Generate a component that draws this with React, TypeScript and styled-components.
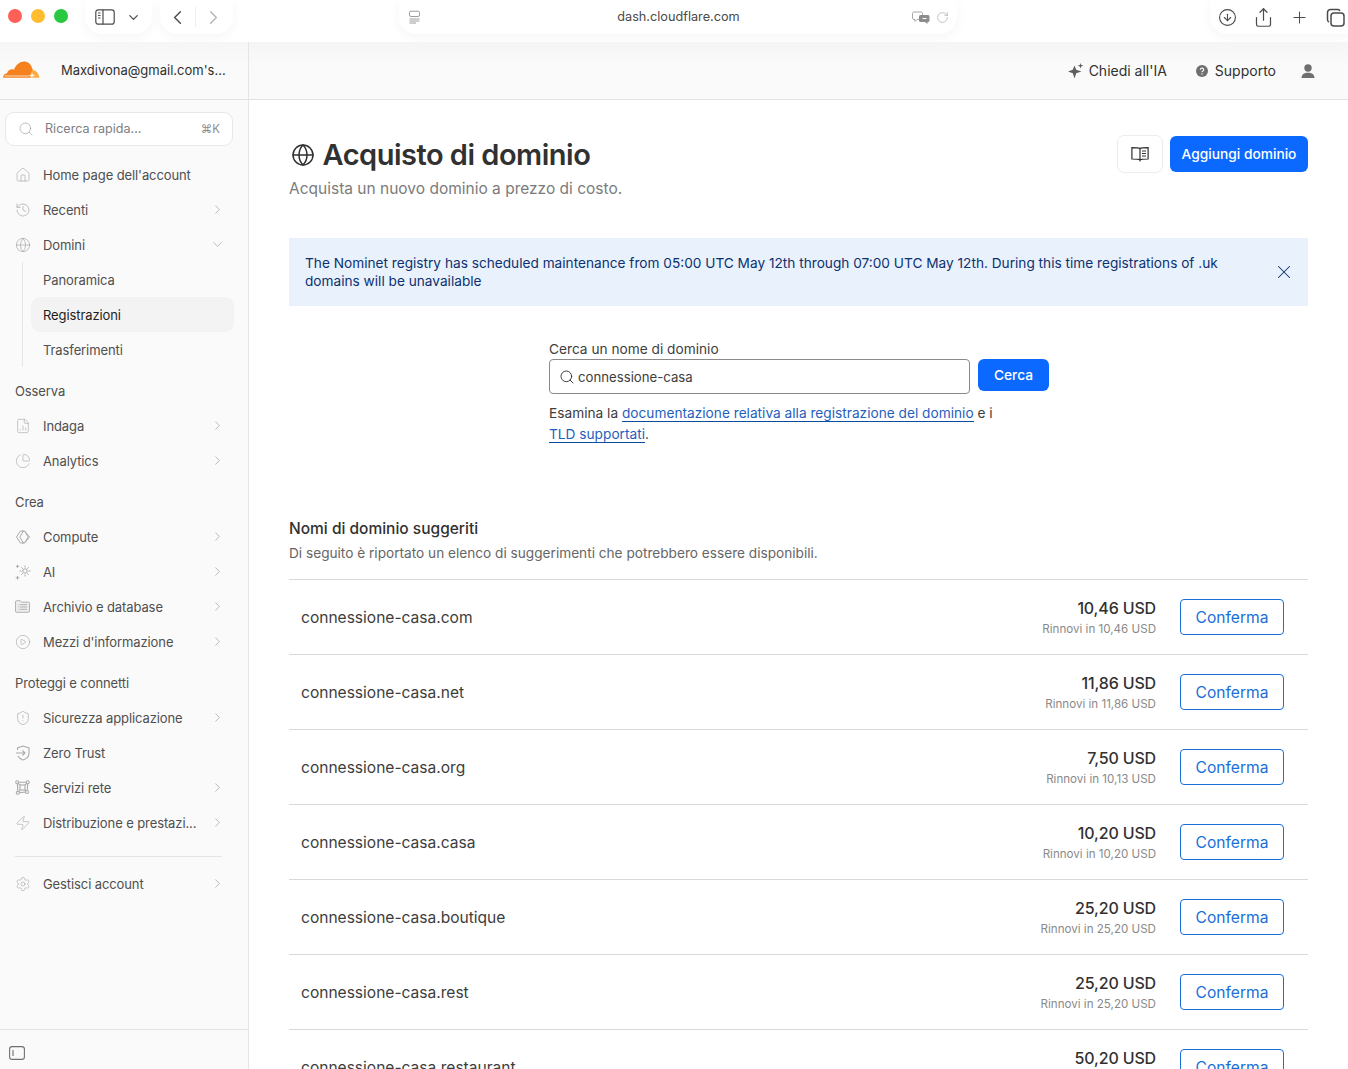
import React from "react";
import styled, { createGlobalStyle } from "styled-components";
import {
  ChevronDown, ChevronLeft, ChevronRight, CircleArrowDown, Plus, Search, X, House, History, Globe,
  ChartPie, CirclePlay, ShieldAlert, Settings, Zap, RotateCw, FileChartColumn, Share,
} from "lucide-react";

const Global = createGlobalStyle`
  html, body { margin: 0; padding: 0; height: 1069px; overflow: hidden; background: #fff; }
  body { font-family: Inter, "Liberation Sans", sans-serif; color: #313131; }
  * { box-sizing: border-box; }
  a { text-decoration: none; }
`;

const Page = styled.div`display: flex; flex-direction: column; width: 1348px; height: 1069px; overflow: hidden;`;

const BrowserBar = styled.div`
  display: flex; flex: none; height: 42px; background: #fff; padding-left: 8px; align-items: flex-start;
`;
const Lights = styled.div`display: flex; gap: 9px; margin-top: 9px; margin-right: 17px;`;
const Light = styled.span<{ $c: string }>`width: 14px; height: 14px; border-radius: 50%; background: ${p => p.$c};`;
const Pill = styled.div<{ $w: number; $ml?: number; $open?: boolean }>`
  display: flex; align-items: center; height: 34px; width: ${p => p.$w}px; margin-left: ${p => p.$ml ?? 0}px; flex: none;
  background: #fff; border-radius: ${p => (p.$open ? "0 0 0 17px" : "0 0 17px 17px")}; box-shadow: 0 3px 12px rgba(0,0,0,.045); color: #4c4c4c;
`;
const PillIcon = styled.span<{ $ml?: number; $mr?: number; $c?: string }>`
  display: flex; margin-left: ${p => p.$ml ?? 0}px; margin-right: ${p => p.$mr ?? 0}px; color: ${p => p.$c ?? "inherit"};
`;
const AddressText = styled.div`flex: 1; text-align: center; font-size: 12.7px; color: #4a4a4a; padding: 0 0 1px 24px;`;
const TabDivider = styled.span`width: 1px; height: 20px; background: #eee; margin: 0 6px;`;

const Shell = styled.div`display: flex; flex: 1; min-height: 0;`;
const Sidebar = styled.aside`
  width: 249px; flex: none; display: flex; flex-direction: column; background: #fafafa; border-right: 1px solid #e5e5e5;
`;
const Brand = styled.div`
  display: flex; align-items: center; height: 58px; flex: none; border-bottom: 1px solid #e2e2e2; padding-left: 3px; gap: 21px;
  font-size: 13px; color: #313131; padding-bottom: 2px; background: linear-gradient(#f6f6f6, #fafafa 40%);
`;
const QuickSearch = styled.div`
  display: flex; align-items: center; height: 34px; margin: 12px 15px 0 5px; padding: 0 12px 1px 12px; flex: none;
  background: #fff; border: 1px solid #e8e8e8; border-radius: 9px; color: #808080; font-size: 12.6px; gap: 11px;
`;
const Kbd = styled.span`margin-left: auto; font-size: 11.5px; color: #8c8c8c;`;
const Nav = styled.nav`flex: 1; padding-top: 11px; display: flex; flex-direction: column; min-height: 0;`;
const Row = styled.div`
  display: flex; align-items: center; height: 35px; padding-left: 15px; padding-right: 23px; font-size: 13px; letter-spacing: -0.1px; color: #4f4f4f; flex: none;
`;
const IconSlot = styled.span`width: 28px; flex: none; display: flex; align-items: center; color: #aaa;`;
const RowLabel = styled.span`flex: 1; white-space: nowrap;`;
const Chevron = styled.span`display: flex; color: #a6a6a6;`;
const SubGroup = styled.div`margin-left: 22px; border-left: 1px solid #e6e6e6; padding-left: 8px; margin-right: 14px;`;
const SubRow = styled.div<{ $active?: boolean }>`
  display: flex; align-items: center; height: 35px; padding-left: 12px; border-radius: 9px; font-size: 13px; letter-spacing: -0.1px;
  background: ${p => (p.$active ? "#f3f3f3" : "transparent")}; color: ${p => (p.$active ? "#1d1d1d" : "#4f4f4f")};
`;
const SectionLabel = styled.div`
  display: flex; align-items: center; height: 35px; margin-top: 6px; padding-left: 15px; font-size: 13px; letter-spacing: -0.1px; color: #4f4f4f; flex: none;
`;
const NavRule = styled.div`height: 1px; background: #e5e5e5; margin: 16px 26px 9px 15px; flex: none;`;
const SideFoot = styled.div`
  height: 40px; flex: none; border-top: 1px solid #e5e5e5; padding: 16px 0 0 9px; color: #6f6f6f; display: flex; align-items: flex-start;
`;

const Main = styled.main`flex: 1; min-width: 0; display: flex; flex-direction: column;`;
const TopBar = styled.header`
  height: 58px; flex: none; display: flex; align-items: center; justify-content: flex-end; gap: 29px; padding: 0 33px 0 0;
  background: linear-gradient(#f5f5f5, #fafafa 40%); border-bottom: 1px solid #e2e2e2; font-size: 14px; color: #313131;
`;
const TopAction = styled.div<{ $gap?: number; $ml?: number }>`
  display: flex; align-items: center; gap: ${p => p.$gap ?? 5}px; margin-left: ${p => p.$ml ?? 0}px; white-space: nowrap;
`;
const Content = styled.div`padding: 35px 40px 0; display: flex; flex-direction: column;`;
const TitleRow = styled.div`display: flex; justify-content: space-between; align-items: flex-start;`;
const TitleCol = styled.div`display: flex; flex-direction: column;`;
const TitleLine = styled.div`display: flex; align-items: center; gap: 7.5px; height: 38px; margin-top: 1px; color: #313131; padding-left: 2px;`;
const Title = styled.h1`margin: 0; font-size: 29px; line-height: 38px; font-weight: 600; letter-spacing: -0.5px; color: #313131;`;
const Subtitle = styled.div`font-size: 15.5px; line-height: 24px; color: #7b7b7b; margin-top: 3px;`;
const Actions = styled.div`display: flex; gap: 7px; align-items: center;`;
const IconButton = styled.button`
  width: 46px; height: 38px; display: flex; align-items: center; justify-content: center; padding: 0;
  background: #fff; border: 1px solid #ececec; border-radius: 7px; color: #313131;
`;
const PrimaryButton = styled.button<{ $w: number; $h: number; $pb?: number }>`
  width: ${p => p.$w}px; height: ${p => p.$h}px; flex: none; padding: 0 0 ${p => p.$pb ?? 0}px; background: #0b69ff; color: #fff; border: 0; border-radius: 6px;
  font: 500 13.75px Inter, sans-serif;
`;
const Banner = styled.div`
  display: flex; align-items: center; height: 68px; margin-top: 37px; padding: 0 13px 0 16px; background: #e9f1fc; color: #0c3170;
  font-size: 13.67px; line-height: 18px;
`;
const BannerText = styled.div`flex: 1; max-width: 950px;`;
const BannerClose = styled.span`margin-left: auto; display: flex; color: #0c3170;`;
const SearchBlock = styled.section`width: 500px; margin: 34px 0 0 260px; font-size: 13.7px; color: #3d3d3d;`;
const FieldLabel = styled.div`line-height: 18px; height: 19px;`;
const FieldRow = styled.div`display: flex; gap: 8px; align-items: flex-start;`;
const Field = styled.div`
  width: 421px; height: 35px; display: flex; align-items: center; gap: 3px; padding: 0 9px; border: 1px solid #8a8a8a; border-radius: 4px;
  color: #3d3d3d; background: #fff; font-size: 13.2px;
`;
const HelpText = styled.p`margin: 9px 0 0; line-height: 21px; width: 470px;`;
const DocLink = styled.a`color: #1f5fbd; border-bottom: 1px solid #0a4d9e;`;
const Suggested = styled.h2`margin: 72px 0 0; font-size: 15.5px; line-height: 24px; font-weight: 450; color: #313131;`;
const SuggestedSub = styled.div`font-size: 13.65px; line-height: 20px; color: #666; margin-top: 2px; margin-bottom: 16px;`;
const DomainRow = styled.div`
  display: flex; align-items: center; height: 75px; flex: none; border-top: 1px solid #d9d9d9; padding: 0 24px 0 12px;
`;
const DomainName = styled.div`flex: 1; font-size: 15.55px; color: #3d3d3d;`;
const Price = styled.div`display: flex; flex-direction: column; align-items: flex-end; margin-right: 24px;`;
const PriceMain = styled.div`font-size: 16px; line-height: 20px; font-weight: 500; color: #313131; letter-spacing: -0.15px;`;
const PriceSub = styled.div`font-size: 11.6px; line-height: 16px; color: #8a8a8a; margin-top: 3px;`;
const Confirm = styled.button`
  width: 104px; height: 36px; padding: 0; background: #fff; color: #1a6fd8; border: 1px solid #1a6fd8; border-radius: 4px;
  font: 400 15.6px Inter, sans-serif;
`;

const Logo = () => (
  <svg width="37" height="17" viewBox="0 0 37 17" fill="none">
    <path d="M0 16.7 C.2 14 1.8 12.5 4 12.3 C5 9 8 7.6 11 8.7 C13 3.5 17 .5 21 .5 C25 .5 28 3 29 7 L30 9 L27 16.7 Z" fill="#f6821f" />
    <path d="M29 9 C33 9 36 12.5 36.4 16.7 L26.5 16.7 Z" fill="#fbad41" />
    <path d="M1.5 15 H26" stroke="#fff" strokeWidth=".7" />
    <path d="M29 11.3 l.7 2.2 2.6 .9 -2.6 .9 -.7 1.9 -.7 -1.9 -2.6 -.9 2.6 -.9z" fill="#fff" opacity=".9" />
  </svg>
);
const SidebarToggle = () => (
  <svg width="20" height="16" viewBox="0 0 20 16" fill="none" stroke="currentColor" strokeWidth="1.2">
    <rect x=".8" y=".8" width="18.4" height="14.4" rx="2.5" />
    <path d="M8 .8 V15.2" />
    <path d="M3 4 H5.5 M3 6.5 H5.5 M3 9 H5.5" strokeWidth="1" />
  </svg>
);
const Reader = () => (
  <svg width="13" height="14" viewBox="0 0 13 14" fill="none" stroke="#9c9c9c" strokeWidth="1">
    <path d="M3 1.2 H10 A1.5 1.5 0 0 1 11.5 2.7 V5 A1.5 1.5 0 0 1 10 6.5 H3 A1.5 1.5 0 0 1 1.5 5 V2.7 A1.5 1.5 0 0 1 3 1.2 Z" />
    <path d="M1.5 9 H11.5 M1.5 11 H11.5 M1.5 13 H8" />
  </svg>
);
const Translate = () => (
  <svg width="18" height="13" viewBox="0 0 18 13">
    <path d="M2 1 H9 A1.5 1.5 0 0 1 10.5 2.5 V7 A1.5 1.5 0 0 1 9 8.5 H5 L3 10.5 V8.5 H2 A1.5 1.5 0 0 1 .5 7 V2.5 A1.5 1.5 0 0 1 2 1 Z" fill="#fff" stroke="#a8a8a8" />
    <path d="M8.5 4 H16 A1.5 1.5 0 0 1 17.5 5.5 V9.5 A1.5 1.5 0 0 1 16 11 H15.5 V13 L13 11 H8.5 A1.5 1.5 0 0 1 7 9.5 V5.5 A1.5 1.5 0 0 1 8.5 4 Z" fill="#8c8c8c" />
    <path d="M10.5 7.5 H14.5" stroke="#fff" />
  </svg>
);
const Tabs = () => (
  <svg width="19" height="19" viewBox="0 0 19 19" fill="none" stroke="currentColor" strokeWidth="1.5">
    <rect x="5" y="5" width="13" height="13" rx="3" fill="#fff" />
    <path d="M14 2.9 A2.5 2.5 0 0 0 12 1.5 H4.5 A3 3 0 0 0 1.5 4.5 V12 A2.5 2.5 0 0 0 3 14" />
  </svg>
);
const Sparkle = () => (
  <svg width="16" height="16" viewBox="0 0 16 16" fill="#5f5f5f">
    <path d="M6.5 2.5 L8.2 6.8 L13.5 8.5 L8.2 10.2 L6.5 15.5 L4.8 10.2 L0 8.5 L4.8 6.8 Z" />
    <path d="M12.5 0 L13.2 2 L15.5 2.7 L13.2 3.4 L12.5 5.5 L11.8 3.4 L9.5 2.7 L11.8 2 Z" />
  </svg>
);
const Help = () => (
  <svg width="12" height="12" viewBox="0 0 12 12">
    <circle cx="6" cy="6" r="6" fill="#6f6f6f" />
    <path d="M4.3 4.7 A1.7 1.6 0 1 1 6.6 6.2 C6 6.5 6 6.7 6 7.3" fill="none" stroke="#fff" strokeWidth="1.1" />
    <circle cx="6" cy="9" r=".7" fill="#fff" />
  </svg>
);
const User = () => (
  <svg width="14" height="14" viewBox="0 0 14 14" fill="#6f6f6f">
    <circle cx="7" cy="4" r="3.7" />
    <path d="M0.5 14 C.7 10.5 3 8.8 7 8.8 C11 8.8 13.3 10.5 13.5 14 Z" />
  </svg>
);
const BookDoc = () => (
  <svg width="18" height="16" viewBox="0 0 18 16" fill="none" stroke="#313131" strokeWidth="1.2">
    <path d="M9 2.5 C7.5 1.6 4 1.6 .9 1.6 V13 C4 13 7.5 13 9 13.6 C10.5 13 14 13 17.1 13 V1.6 C14 1.6 10.5 1.6 9 2.5 Z" />
    <path d="M9 2.5 V15.5" />
    <path d="M11 5 H15 M11 7.5 H15 M11 10 H15" />
  </svg>
);
const Diamond = () => (
  <svg width="16" height="16" viewBox="0 0 16 16" fill="none" stroke="#aaa" strokeWidth="1">
    <path d="M5.5 2 H8.5 L4.8 8 L8.5 14 H5.5 L1.5 8 Z" />
    <path d="M9.5 2 L14.5 8 L9.5 14 L7 14 M9.5 2 L7 2" />
    <path d="M9.5 2 L13.2 8 L9.5 14" />
  </svg>
);
const AiIcon = () => (
  <svg width="16" height="16" viewBox="0 0 16 16" fill="none" stroke="#aaa" strokeWidth="1">
    <circle cx="10" cy="7" r="2.2" />
    <path d="M10 1.5 V3.5 M10 10.5 V12.5 M15.5 7 H13.5 M6.5 7 H4.5 M13.7 3.3 L12.2 4.8 M7.8 9.2 L6.3 10.7 M6.3 3.3 L7.8 4.8 M12.2 9.2 L13.7 10.7" />
    <path d="M2.5 .8 V3.8 M1 2.3 H4 M2.5 12 V15.6 M.7 13.8 H4.3" />
  </svg>
);
const Archive = () => (
  <svg width="15" height="13" viewBox="0 0 16 14" fill="none" stroke="#aaa" strokeWidth="1">
    <path d="M.5 2 A1.2 1.2 0 0 1 1.7 .8 H5.5 L7 2.3 H14.3 A1.2 1.2 0 0 1 15.5 3.5 V12 A1.2 1.2 0 0 1 14.3 13.2 H1.7 A1.2 1.2 0 0 1 .5 12 Z" fill="#f0f0f0" />
    <path d="M5 5 H13 M5 7.5 H13 M5 10 H13 M3 5 H3.8 M3 7.5 H3.8 M3 10 H3.8" />
  </svg>
);
const Trust = () => (
  <svg width="16" height="16" viewBox="0 0 16 16" fill="none" stroke="#aaa" strokeWidth="1.1">
    <path d="M2.5 5 V3 L8 1 L14 3 V8.5 C14 11.5 11 14 8 15 C6 14.4 4 13 3 11" />
    <path d="M1 8 H10 M7.5 5.5 L10 8 L7.5 10.5" />
  </svg>
);
const NetIcon = () => (
  <svg width="15" height="15" viewBox="0 0 15 15" fill="none" stroke="#aaa" strokeWidth="1.1">
    <circle cx="2.2" cy="2.2" r="1.5" /><circle cx="12.8" cy="2.2" r="1.5" /><circle cx="2.8" cy="12.8" r="1.5" /><circle cx="12" cy="12" r="1.5" />
    <path d="M3.7 2.2 H11.3 M2.4 3.7 L2.8 11.3 M12.7 3.7 L12.2 10.5 M4.3 12.7 L10.5 12" />
    <rect x="5" y="5" width="5" height="5" />
    <path d="M3.3 3.3 L5 5 M11.7 3.3 L10 5 M4 11.7 L5 10 M11 11 L10 10" />
  </svg>
);
const PanelSmall = () => (
  <svg width="16" height="14" viewBox="0 0 16 14" fill="none" stroke="currentColor" strokeWidth="1.1">
    <rect x=".6" y=".6" width="14.8" height="12.8" rx="2.5" />
    <path d="M4 4 V10" />
  </svg>
);

type Item = { label: string; icon: React.ReactNode; more?: boolean };
const I = 16;
const NavRow = ({ label, icon, more }: Item) => (
  <Row>
    <IconSlot>{icon}</IconSlot>
    <RowLabel>{label}</RowLabel>
    {more && <Chevron><ChevronRight size={15} strokeWidth={1.2} /></Chevron>}
  </Row>
);

const domains = [
  ["connessione-casa.com", "10,46 USD", "10,46 USD"],
  ["connessione-casa.net", "11,86 USD", "11,86 USD"],
  ["connessione-casa.org", "7,50 USD", "10,13 USD"],
  ["connessione-casa.casa", "10,20 USD", "10,20 USD"],
  ["connessione-casa.boutique", "25,20 USD", "25,20 USD"],
  ["connessione-casa.rest", "25,20 USD", "25,20 USD"],
  ["connessione-casa.restaurant", "50,20 USD", "50,20 USD"],
];

export default function App() {
  return (
    <Page>
      <Global />
      <BrowserBar>
        <Lights>
          <Light $c="#fe5f57" /><Light $c="#febc2e" /><Light $c="#28c840" />
        </Lights>
        <Pill $w={67}>
          <PillIcon $ml={10}><SidebarToggle /></PillIcon>
          <PillIcon $ml={11}><ChevronDown size={15} strokeWidth={2} /></PillIcon>
        </Pill>
        <Pill $w={73} $ml={8}>
          <PillIcon $ml={6}><ChevronLeft size={23} strokeWidth={1.5} /></PillIcon>
          <TabDivider />
          <PillIcon $c="#b5b5b5"><ChevronRight size={23} strokeWidth={1.5} /></PillIcon>
        </Pill>
        <Pill $w={558} $ml={166}>
          <PillIcon $ml={9}><Reader /></PillIcon>
          <AddressText>dash.cloudflare.com</AddressText>
          <Translate />
          <PillIcon $ml={6} $mr={8} $c="#a5a5a5"><RotateCw size={13} strokeWidth={1.2} /></PillIcon>
        </Pill>
        <Pill $w={138} $ml={253} $open>
          <PillIcon $ml={8}><CircleArrowDown size={19} strokeWidth={1.4} /></PillIcon>
          <PillIcon $ml={16}><Share size={21} strokeWidth={1.4} /></PillIcon>
          <PillIcon $ml={16}><Plus size={19} strokeWidth={1.3} /></PillIcon>
          <PillIcon $ml={17}><Tabs /></PillIcon>
        </Pill>
      </BrowserBar>
      <Shell>
        <Sidebar>
          <Brand><Logo /><span>Maxdivona@gmail.com's...</span></Brand>
          <QuickSearch>
            <Search size={16} strokeWidth={1.1} color="#a8a8a8" />
            <span>Ricerca rapida...</span>
            <Kbd>⌘K</Kbd>
          </QuickSearch>
          <Nav>
            <NavRow label="Home page dell'account" icon={<House size={I} strokeWidth={1} />} />
            <NavRow label="Recenti" more icon={<History size={I} strokeWidth={1.1} />} />
            <Row>
              <IconSlot><Globe size={I} strokeWidth={1.1} /></IconSlot>
              <RowLabel>Domini</RowLabel>
              <Chevron><ChevronDown size={15} strokeWidth={1.2} /></Chevron>
            </Row>
            <SubGroup>
              <SubRow>Panoramica</SubRow>
              <SubRow $active>Registrazioni</SubRow>
              <SubRow>Trasferimenti</SubRow>
            </SubGroup>
            <SectionLabel>Osserva</SectionLabel>
            <NavRow label="Indaga" more icon={<FileChartColumn size={I} strokeWidth={1} />} />
            <NavRow label="Analytics" more icon={<ChartPie size={I} strokeWidth={1} />} />
            <SectionLabel>Crea</SectionLabel>
            <NavRow label="Compute" more icon={<Diamond />} />
            <NavRow label="AI" more icon={<AiIcon />} />
            <NavRow label="Archivio e database" more icon={<Archive />} />
            <NavRow label="Mezzi d'informazione" more icon={<CirclePlay size={I} strokeWidth={1} />} />
            <SectionLabel>Proteggi e connetti</SectionLabel>
            <NavRow label="Sicurezza applicazione" more icon={<ShieldAlert size={I} strokeWidth={1.1} />} />
            <NavRow label="Zero Trust" icon={<Trust />} />
            <NavRow label="Servizi rete" more icon={<NetIcon />} />
            <NavRow label="Distribuzione e prestazi..." more icon={<Zap size={I} strokeWidth={1} />} />
            <NavRule />
            <NavRow label="Gestisci account" more icon={<Settings size={I} strokeWidth={1} />} />
          </Nav>
          <SideFoot><PanelSmall /></SideFoot>
        </Sidebar>
        <Main>
          <TopBar>
            <TopAction><Sparkle />Chiedi all'IA</TopAction>
            <TopAction $gap={7}><Help />Supporto</TopAction>
            <TopAction $ml={-4}><User /></TopAction>
          </TopBar>
          <Content>
            <TitleRow>
              <TitleCol>
                <TitleLine>
                  <Globe size={24} strokeWidth={1.5} />
                  <Title>Acquisto di dominio</Title>
                </TitleLine>
                <Subtitle>Acquista un nuovo dominio a prezzo di costo.</Subtitle>
              </TitleCol>
              <Actions>
                <IconButton><BookDoc /></IconButton>
                <PrimaryButton $w={138} $h={36} $pb={1}>Aggiungi dominio</PrimaryButton>
              </Actions>
            </TitleRow>
            <Banner>
              <BannerText>
                The Nominet registry has scheduled maintenance from 05:00 UTC May 12th through 07:00 UTC May 12th. During this time registrations of .uk domains will be unavailable
              </BannerText>
              <BannerClose><X size={22} strokeWidth={1.1} /></BannerClose>
            </Banner>
            <SearchBlock>
              <FieldLabel>Cerca un nome di dominio</FieldLabel>
              <FieldRow>
                <Field><Search size={16} strokeWidth={1.5} />connessione-casa</Field>
                <PrimaryButton $w={71} $h={32}>Cerca</PrimaryButton>
              </FieldRow>
              <HelpText>
                Esamina la <DocLink>documentazione relativa alla registrazione del dominio</DocLink> e i <DocLink>TLD supportati</DocLink>.
              </HelpText>
            </SearchBlock>
            <Suggested>Nomi di dominio suggeriti</Suggested>
            <SuggestedSub>Di seguito è riportato un elenco di suggerimenti che potrebbero essere disponibili.</SuggestedSub>
            {domains.map(([name, price, renew]) => (
              <DomainRow key={name}>
                <DomainName>{name}</DomainName>
                <Price>
                  <PriceMain>{price}</PriceMain>
                  <PriceSub>Rinnovi in {renew}</PriceSub>
                </Price>
                <Confirm>Conferma</Confirm>
              </DomainRow>
            ))}
          </Content>
        </Main>
      </Shell>
    </Page>
  );
}
